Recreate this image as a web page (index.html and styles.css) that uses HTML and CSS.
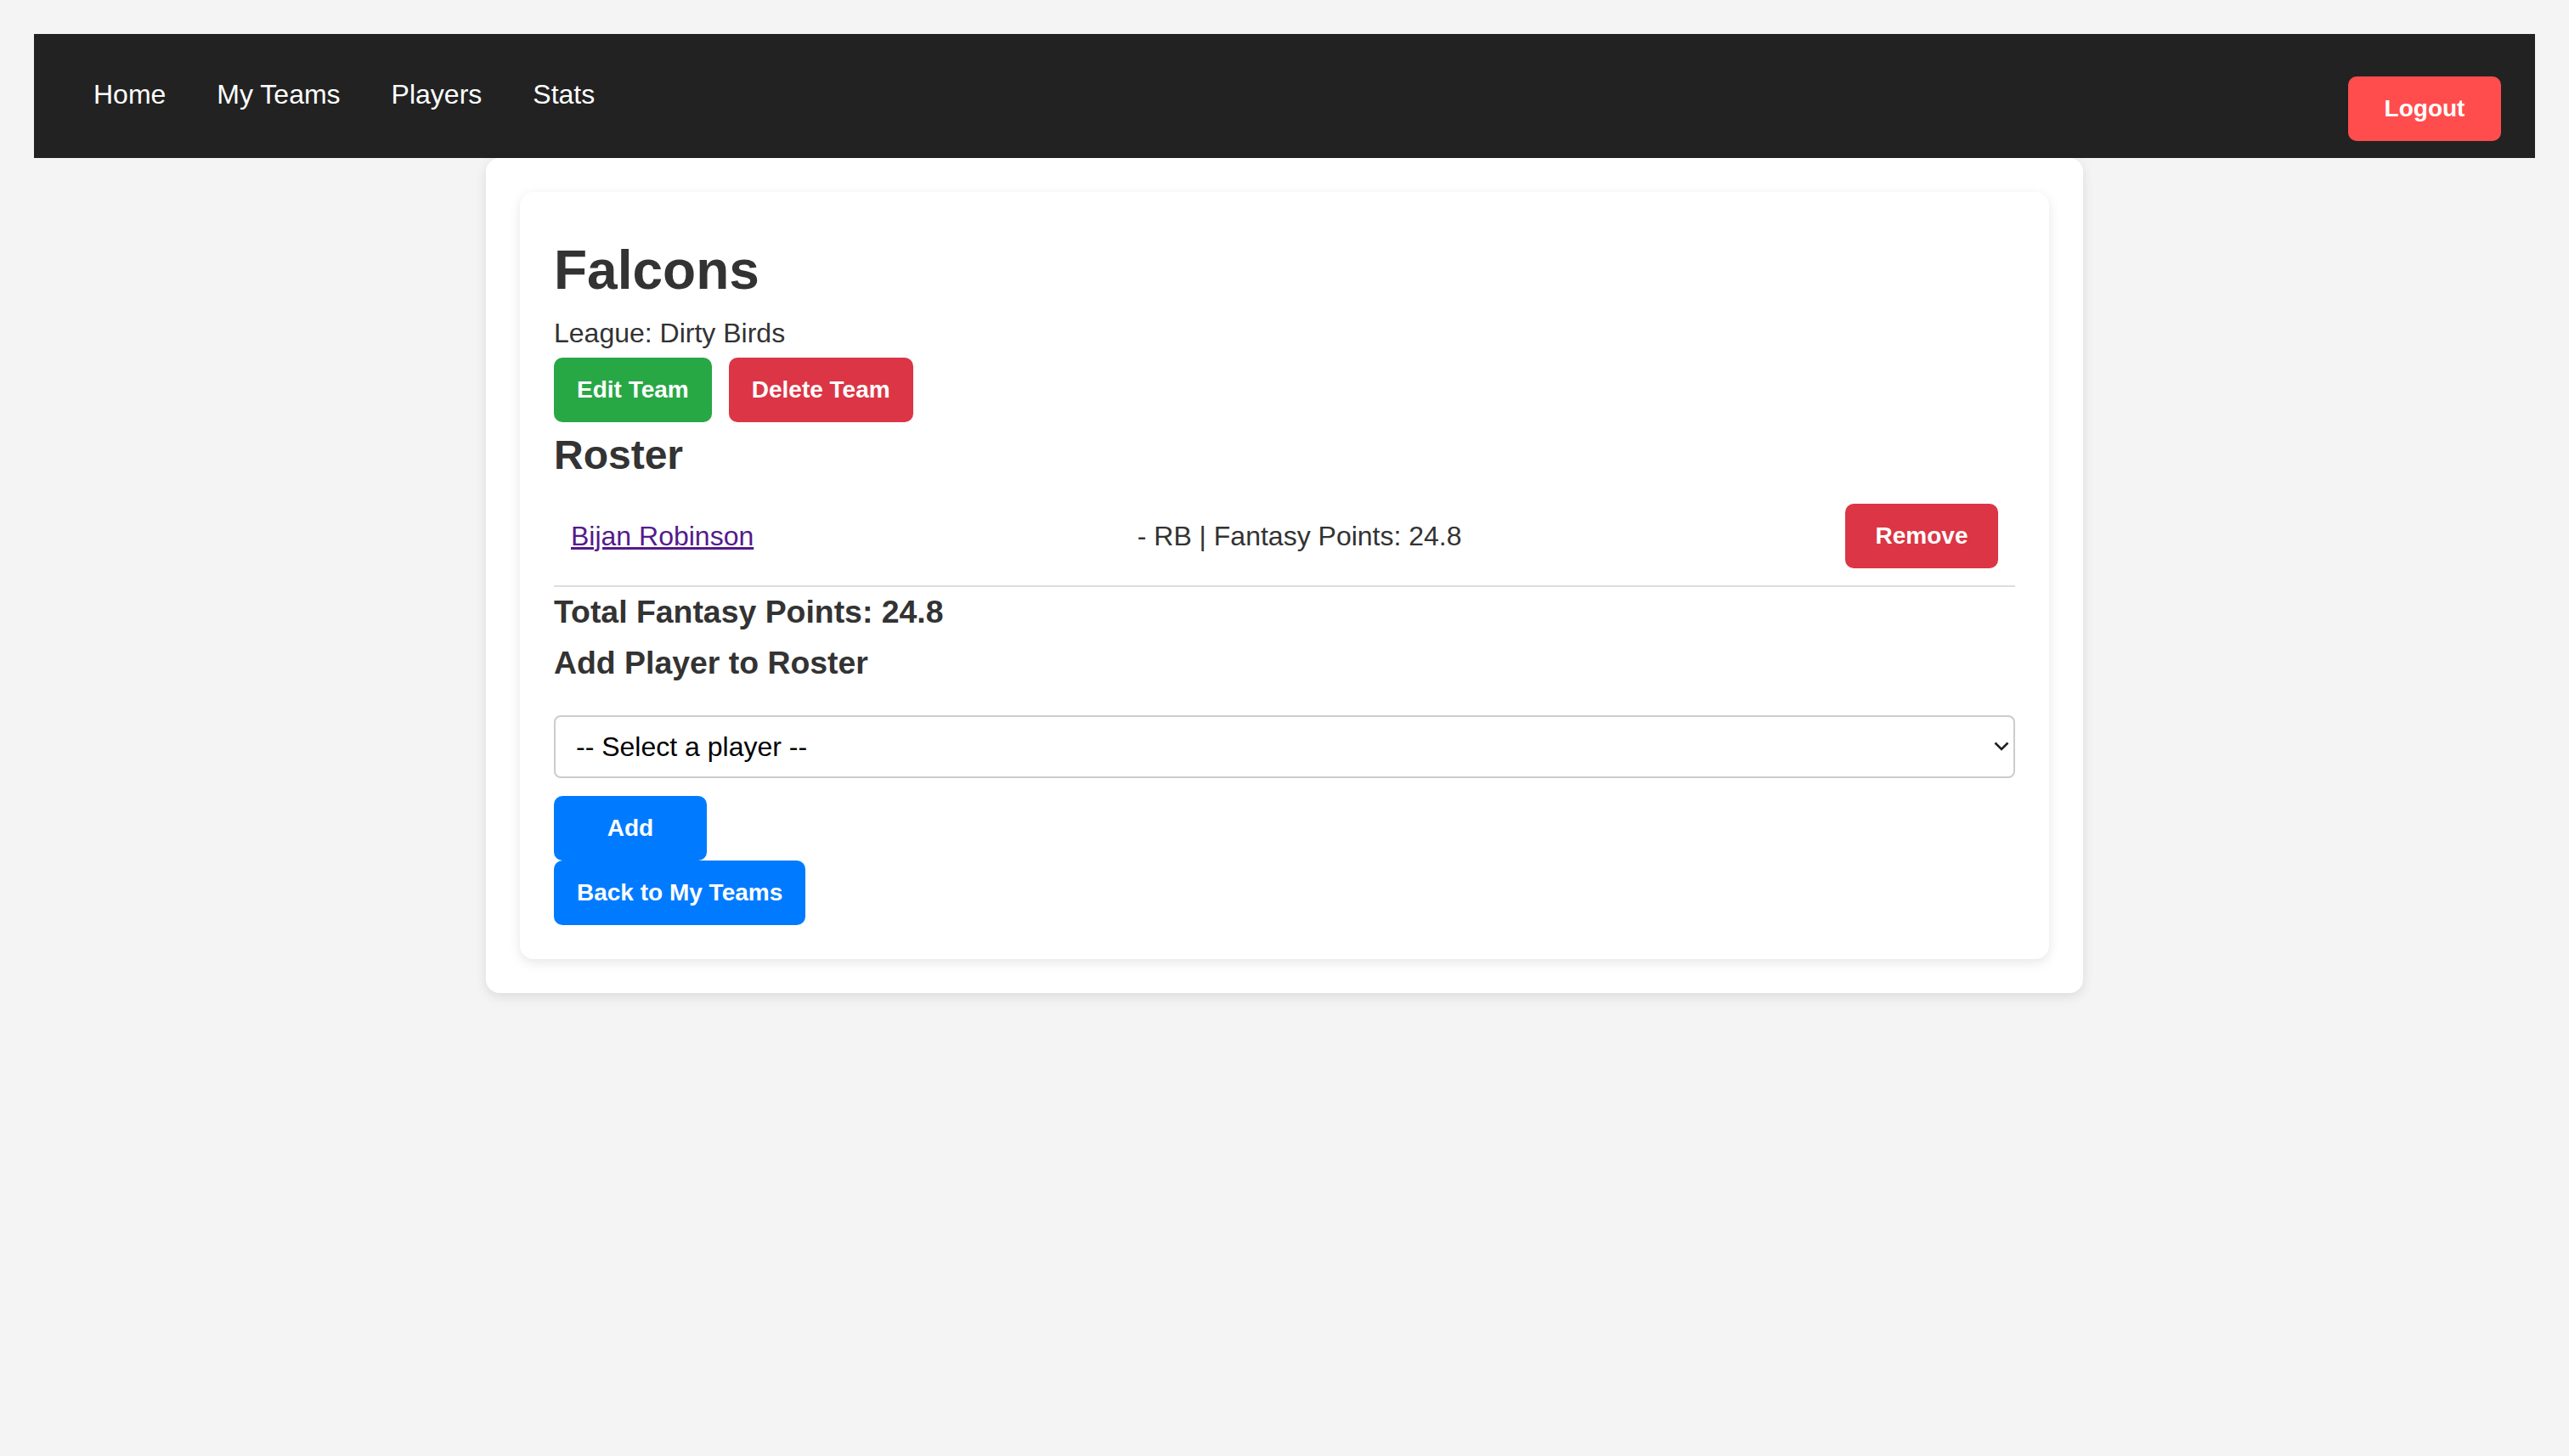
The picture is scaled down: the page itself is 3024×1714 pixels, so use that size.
FILE: index.html
```html
<!DOCTYPE html>
<html lang="en">
<head>
<meta charset="utf-8">
<title>Falcons - Team</title>
<link rel="stylesheet" href="styles.css">
</head>
<body>
<nav class="navbar">
  <div class="nav-links">
    <a class="nav-link" href="#">Home</a>
    <a class="nav-link" href="#">My Teams</a>
    <a class="nav-link" href="#">Players</a>
    <a class="nav-link" href="#">Stats</a>
  </div>
  <button class="btn btn-logout" type="button">Logout</button>
</nav>
<main class="container">
  <section class="team-card">
    <h1 class="team-name">Falcons</h1>
    <p class="league">League: Dirty Birds</p>
    <div class="team-actions">
      <button class="btn btn-green" type="button">Edit Team</button>
      <button class="btn btn-red" type="button">Delete Team</button>
    </div>
    <h2 class="section-title">Roster</h2>
    <ul class="roster">
      <li class="roster-item">
        <a class="player-link" href="#">Bijan Robinson</a>
        <span class="player-info">- RB | Fantasy Points: 24.8</span>
        <button class="btn btn-red" type="button">Remove</button>
      </li>
    </ul>
    <h3 class="total">Total Fantasy Points: 24.8</h3>
    <h3 class="add-title">Add Player to Roster</h3>
    <form class="add-form">
      <div class="select-wrap">
        <select class="player-select">
          <option>-- Select a player --</option>
        </select>
        <svg class="chevron" width="18" height="12" viewBox="0 0 18 12"><polyline points="1.5,1.5 9,9 16.5,1.5" fill="none" stroke="#222" stroke-width="2.6"/></svg>
      </div>
      <div class="form-row"><button class="btn btn-blue" type="button">Add</button></div>
    </form>
    <div class="back-row"><a class="btn btn-blue" href="#">Back to My Teams</a></div>
  </section>
</main>
</body>
</html>
```
FILE: styles.css
```css
html, body {
  margin: 0;
}
body {
  background: #f4f4f4;
  padding: 40px;
  font-family: "Liberation Sans", Arial, Helvetica, sans-serif;
  color: #333;
}

/* Navbar */
.navbar {
  display: flex;
  justify-content: space-between;
  height: 146px;
  padding: 0 40px;
  background: #222;
  box-sizing: border-box;
}
.nav-links {
  display: flex;
  align-items: center;
  padding-bottom: 3px;
}
.nav-link {
  margin: 0 30px;
  color: #fff;
  text-decoration: none;
  font-size: 32px;
  line-height: 37px;
}

/* Buttons */
.btn {
  display: inline-block;
  box-sizing: border-box;
  min-width: 180px;
  padding: 22px 27px;
  border: none;
  border-radius: 10px;
  color: #fff;
  font-family: "Liberation Sans", Arial, Helvetica, sans-serif;
  font-size: 28px;
  font-weight: bold;
  line-height: 32px;
  text-align: center;
  text-decoration: none;
  cursor: pointer;
}
.btn-logout {
  align-self: flex-end;
  margin-bottom: 20px;
  background: #ff4d4d;
}
.btn-green { background: #28a745; }
.btn-red { background: #dc3545; }
.btn-blue { background: #007bff; }

/* Cards */
.container {
  max-width: 1880px;
  margin: 0 auto;
  padding: 40px;
  box-sizing: border-box;
  background: #fff;
  border-radius: 16px;
  box-shadow: 0 4px 14px rgba(0, 0, 0, 0.1);
}
.team-card {
  padding: 40px;
  background: #fff;
  border-radius: 16px;
  box-shadow: 0 4px 14px rgba(0, 0, 0, 0.1);
}

.team-name {
  margin: 15px 0 19px;
  font-size: 64px;
  line-height: 74px;
  font-weight: bold;
  color: #333;
}
.league {
  margin: 0 0 10px;
  font-size: 32px;
  line-height: 37px;
}
.team-actions {
  display: flex;
  gap: 20px;
  margin-bottom: 11px;
}
.section-title {
  margin: 0 0 10px;
  font-size: 48px;
  line-height: 55px;
  color: #333;
}
.roster {
  list-style: none;
  margin: 0;
  padding: 0;
}
.roster-item {
  display: flex;
  justify-content: space-between;
  align-items: center;
  padding: 20px;
  border-bottom: 2px solid #ddd;
  font-size: 32px;
  line-height: 37px;
}
.player-link {
  color: #551a8b;
  text-decoration: underline;
}
.total {
  margin: 8px 0 0;
  font-size: 37.4px;
  line-height: 42px;
}
.add-title {
  margin: 18px 0 0;
  font-size: 37.4px;
  line-height: 42px;
}
.add-form {
  margin-top: 41px;
}
.select-wrap {
  position: relative;
}
.player-select {
  display: block;
  width: 100%;
  height: 74px;
  box-sizing: border-box;
  padding: 0 24px;
  border: 2px solid #ccc;
  border-radius: 8px;
  background: #fff;
  color: #000;
  font-family: "Liberation Sans", Arial, Helvetica, sans-serif;
  font-size: 32px;
  appearance: none;
  -webkit-appearance: none;
}
.chevron {
  position: absolute;
  right: 7px;
  top: 31px;
  pointer-events: none;
}
.form-row {
  margin-top: 21px;
}
.back-row {
  display: flex;
}
```
